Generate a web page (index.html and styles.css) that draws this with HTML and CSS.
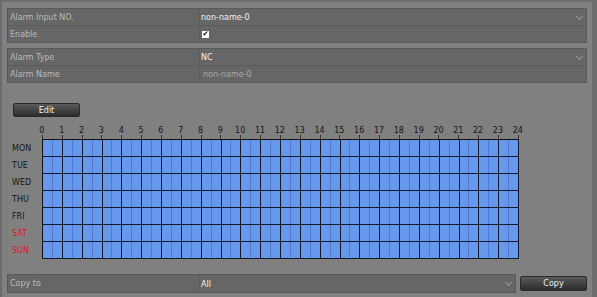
FILE: index.html
```html
<!DOCTYPE html>
<html lang="en">
<head>
    <meta charset="UTF-8">
    <title>Alarm Input</title>
    <link rel="stylesheet" href="styles.css">
</head>
<body>

<div class="frame">
<div class="panel">

    <!-- Input settings -->
    <div class="group">
        <div class="row">
            <div class="label">Alarm Input NO.</div>
            <div class="value">non-name-0 <span class="chevron"></span></div>
        </div>
        <div class="row">
            <div class="label">Enable</div>
            <div class="value"><span class="check">&#10004;</span></div>
        </div>
    </div>

    <div class="group">
        <div class="row">
            <div class="label">Alarm Type</div>
            <div class="value">NC <span class="chevron"></span></div>
        </div>
        <div class="row">
            <div class="label">Alarm Name</div>
            <div class="value muted">non-name-0</div>
        </div>
    </div>

    <button class="btn edit-btn">Edit</button>

    <!-- Weekly schedule -->
    <div class="schedule">
        <div class="corner"></div>
        <div class="hours" id="hours"></div>
        <div class="days">
            <div>MON</div>
            <div>TUE</div>
            <div>WED</div>
            <div>THU</div>
            <div>FRI</div>
            <div class="weekend">SAT</div>
            <div class="weekend">SUN</div>
        </div>
        <div class="grid" id="grid"></div>
    </div>

    <div class="copy-bar">
        <div class="group copy-group">
            <div class="row">
                <div class="label">Copy to</div>
                <div class="value">All <span class="chevron"></span></div>
            </div>
        </div>
        <button class="btn copy-btn">Copy</button>
    </div>

</div>
</div>

<script>
    // hour labels 0..24
    const hours = document.getElementById('hours');
    for (let h = 0; h <= 24; h++) {
        const s = document.createElement('span');
        s.textContent = h;
        hours.appendChild(s);
    }

    // 7 days x 24 hours
    const grid = document.getElementById('grid');
    for (let i = 0; i < 7 * 24; i++) {
        const c = document.createElement('div');
        c.className = 'cell';
        grid.appendChild(c);
    }
</script>

</body>
</html>
```

FILE: styles.css
```css
body {
    margin: 0;
    font-family: "DejaVu Sans", sans-serif;
    font-size: 8px;
    background: #6c6c6c;
}
.frame {
    padding: 2px 5px 0 2px;
    height: 295px;
}
.panel {
    background: #808080;
    height: 100%;
    padding: 6px 5px 0 5px;
    box-sizing: border-box;
}

/* form rows */
.group {
    border: 1px solid #595959;
    background: #666666;
    margin-bottom: 5px;
}
.row {
    display: flex;
    height: 16px;
    align-items: center;
}
.row + .row {
    border-top: 1px solid #5b5b5b;
}
.label {
    width: 192px;
    padding-left: 2px;
    color: #bababa;
    border-right: 1px solid #5d5d5d;
    height: 100%;
    line-height: 17px;
    box-sizing: border-box;
}
.value {
    flex: 1;
    display: flex;
    align-items: center;
    padding-left: 1px;
    padding-top: 1px;
    color: #f2f2f2;
}
.value.muted {
    color: #a9a9a9;
    padding-left: 3px;
}
.chevron {
    margin-left: auto;
    margin-right: 4px;
    width: 4px;
    height: 4px;
    border-right: 1.5px solid #9a9a9a;
    border-bottom: 1.5px solid #9a9a9a;
    transform: rotate(45deg);
    margin-top: -3px;
}
.check {
    display: inline-block;
    width: 7px;
    height: 7px;
    background: #fff;
    color: #000;
    font-size: 7px;
    line-height: 7px;
    text-align: center;
    margin-left: 1px;
}

/* buttons */
.btn {
    font-family: "DejaVu Sans", sans-serif;
    font-size: 8px;
    color: #f0f0f0;
    background: linear-gradient(#5a5a5a, #2c2c2c);
    border: 1px solid #2a2a2a;
    border-radius: 2px;
    padding: 0;
    cursor: pointer;
}
.edit-btn {
    display: block;
    width: 67px;
    height: 14px;
    margin: 20px 0 0 6px;
}

/* schedule */
.schedule {
    display: grid;
    grid-template-columns: 30px 477px;
    margin: 9px 0 0 5px;
}
.hours {
    display: flex;
    height: 13px;
    margin-left: -10px;
    color: #161616;
}
.hours span {
    width: 19.83px;
    flex: none;
    text-align: center;
    line-height: 9px;
    position: relative;
}
.hours span::after {
    content: "";
    position: absolute;
    left: 50%;
    top: 9px;
    height: 4px;
    border-left: 1px solid #333;
}
.days {
    padding-top: 1px;
}
.days div {
    height: 17px;
    line-height: 17px;
    color: #161616;
}
.days .weekend {
    color: #e0161b;
}
.grid {
    display: grid;
    grid-template-columns: repeat(24, 1fr);
    border-top: 1px solid #111;
    border-left: 1px solid #111;
}
.cell {
    height: 16px;
    border-right: 1px solid #121a2a;
    border-bottom: 1px solid #121a2a;
    background: linear-gradient(90deg, transparent calc(50% - 0.5px), #4f7acb calc(50% - 0.5px), #4f7acb calc(50% + 0.5px), transparent calc(50% + 0.5px)), #6699ee;
}

/* copy bar */
.copy-bar {
    display: flex;
    align-items: center;
    gap: 4px;
    margin-top: 15px;
}
.copy-group {
    width: 507px;
    margin: 0;
    flex: none;
}
.copy-group .row {
    height: 17px;
}
.copy-btn {
    width: 67px;
    height: 15px;
}
```
